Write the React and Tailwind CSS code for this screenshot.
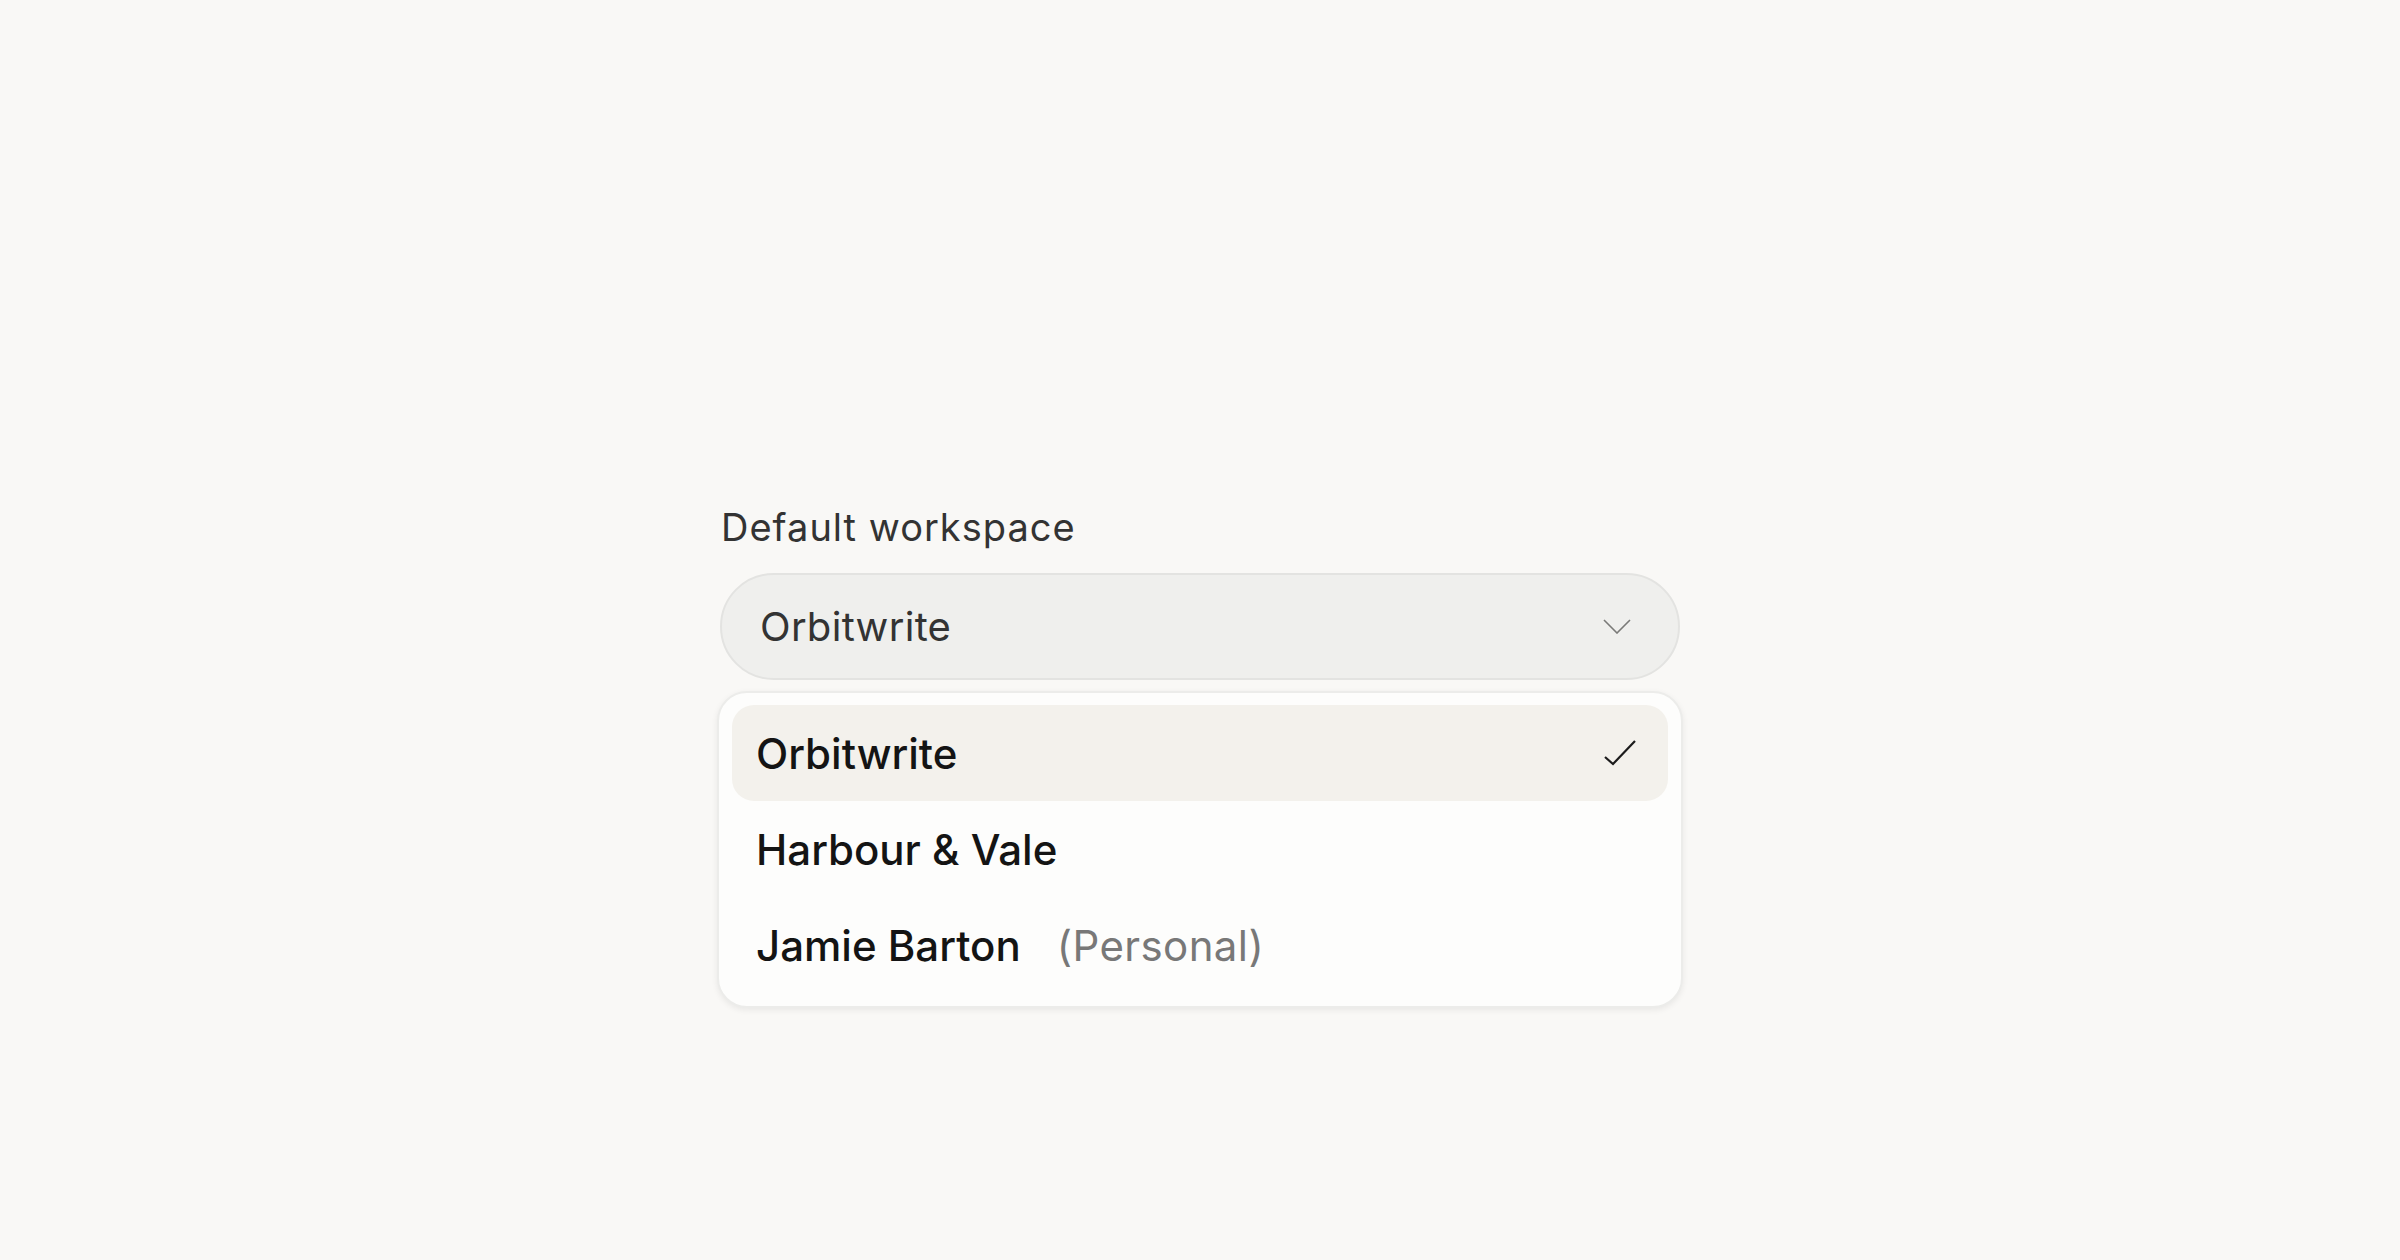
import { useState } from "react";

const WORKSPACES = [
  { id: "orbitwrite", name: "Orbitwrite" },
  { id: "harbour", name: "Harbour & Vale" },
  { id: "jamie", name: "Jamie Barton", note: "(Personal)" },
];

function ChevronDown() {
  return (
    <svg width="28" height="15" viewBox="0 0 28 15" fill="none">
      <path d="M1 1 14 14 27 1" stroke="#7a7a78" strokeWidth="1.6" />
    </svg>
  );
}

function CheckMark() {
  return (
    <svg width="32" height="26" viewBox="0 0 32 26" fill="none">
      <path d="M1 17 9 24 31 1" stroke="#1c1c1c" strokeWidth="2.2" />
    </svg>
  );
}

export default function App() {
  const [selected, setSelected] = useState("orbitwrite");
  const current = WORKSPACES.find((w) => w.id === selected);

  return (
    <div className="min-h-screen bg-[#f9f8f6] font-['Inter',sans-serif] flex justify-center pt-[505px]">
      <div className="w-[960px] flex flex-col">
        <label className="text-[38px] leading-[44px] tracking-[1px] text-[#333333] pl-[1px]">
          Default workspace
        </label>

        {/* Trigger */}
        <button className="mt-[24px] h-[107px] w-full rounded-full border-2 border-[#e3e3e1] bg-[#efefed] flex items-center justify-between pl-[38px] pr-[47px] text-left">
          <span className="text-[40px] tracking-[0.3px] text-[#333333]">{current.name}</span>
          <ChevronDown />
        </button>

        {/* Menu */}
        <div className="mt-[11px] -mx-[3px] rounded-[30px] border-2 border-[#ececea] bg-[#fdfdfc] shadow-[0_2px_6px_rgba(0,0,0,0.07)] px-[13px] pt-[12px] pb-[13px] flex flex-col">
          {WORKSPACES.map((w) => {
            const active = w.id === selected;
            return (
              <div
                key={w.id}
                onClick={() => setSelected(w.id)}
                className={`h-[96px] flex items-center justify-between rounded-[22px] pl-[24px] pr-[32px] ${
                  active ? "bg-[#f3f1ec]" : ""
                }`}
              >
                <span className="text-[42px] font-medium text-[#141414]">
                  {w.name}
                  {w.note ? (
                    <span className="ml-[36px] font-normal tracking-[0.4px] text-[#787878]">
                      {w.note}
                    </span>
                  ) : null}
                </span>
                {active ? <CheckMark /> : null}
              </div>
            );
          })}
        </div>
      </div>
    </div>
  );
}
